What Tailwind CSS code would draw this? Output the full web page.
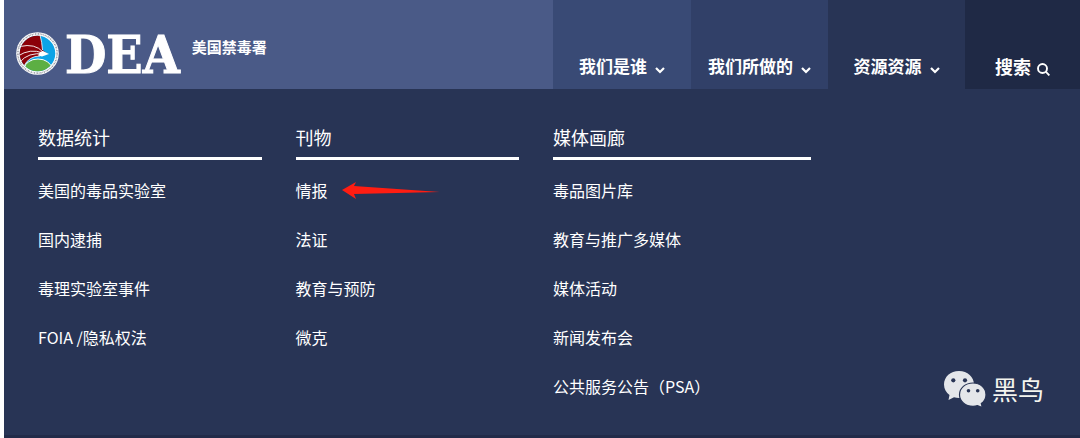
<!DOCTYPE html>
<html lang="zh-CN">
<head>
<meta charset="utf-8">
<meta name="viewport" content="width=device-width, initial-scale=1">
<title>DEA 美国禁毒署</title>
<script src="https://cdn.jsdelivr.net/npm/@tailwindcss/browser@4"></script>
</head>
<body class="min-h-screen bg-white pl-1 font-['Noto_Sans_CJK_SC',sans-serif] text-white">
<div class="relative flex min-h-screen flex-col border-b-3 border-[#222b49] bg-[#283455]">
  <header class="flex">
    <a href="#" class="flex flex-1 items-start bg-[#4a5a87] pl-3">
      <svg class="mt-8 size-[43px] shrink-0" viewBox="0 0 43 43" aria-hidden="true">
        <defs>
          <clipPath id="disc"><circle cx="21.5" cy="21.5" r="17.8"/></clipPath>
        </defs>
        <circle cx="21.5" cy="21.5" r="21.3" fill="#fff"/>
        <circle cx="21.5" cy="21.5" r="19.6" fill="none" stroke="#9a9ca6" stroke-width="1.6" stroke-dasharray="1.2 .7 .6 .8"/>
        <g clip-path="url(#disc)">
          <rect width="43" height="43" fill="#0da3e6"/>
          <ellipse cx="22" cy="36.5" rx="13.5" ry="9.5" fill="#5caf43" stroke="#fff" stroke-width="1"/>
          <path d="M0 3L24 3Q26 10 26.500 18L32 22L24 24Q13 24 8 34L0 32Z" fill="#8b0008"/>
          <path d="M24 3Q26 10 26.500 18M24 24Q13 24 8 34" fill="none" stroke="#fff" stroke-width=".8"/>
          <path d="M4 14.500Q19 11 27 20M2 24Q14 16 27 21M4 30Q12 20 28 22" fill="none" stroke="#fff" stroke-width=".9"/>
          <path d="M24 20L27 19L33 22L26 24.500L22 23.500Z" fill="#fff"/>
        </g>
      </svg>
      <span class="ml-1.5 mt-6 font-['DejaVu_Serif_Condensed','DejaVu_Serif',serif] text-[53px] leading-[60px] font-bold [-webkit-text-stroke:1px_white]">DEA</span>
      <span class="ml-3 mt-[35px] text-[15px] leading-6 font-bold">美国禁毒署</span>
    </a>
    <nav class="flex h-[89px] text-[17px] leading-6 font-bold" aria-label="主导航">
      <button type="button" class="flex w-[138px] items-end justify-center gap-2 bg-[#394a75] pb-[11px]">我们是谁
        <svg class="mb-0.5 h-3 w-2.5" viewBox="0 0 10 12" fill="none" stroke="currentColor" stroke-width="2.2" aria-hidden="true"><path d="M1 4l4 4 4-4"/></svg>
      </button>
      <button type="button" class="flex w-[137px] items-end justify-center gap-2 bg-[#314068] pb-[11px]">我们所做的
        <svg class="mb-0.5 h-3 w-2.5" viewBox="0 0 10 12" fill="none" stroke="currentColor" stroke-width="2.2" aria-hidden="true"><path d="M1 4l4 4 4-4"/></svg>
      </button>
      <button type="button" aria-expanded="true" class="flex w-[137px] items-end justify-center gap-2 bg-[#283455] pb-[11px]">资源资源
        <svg class="mb-0.5 h-3 w-2.5" viewBox="0 0 10 12" fill="none" stroke="currentColor" stroke-width="2.2" aria-hidden="true"><path d="M1 4l4 4 4-4"/></svg>
      </button>
      <button type="button" class="flex w-[115px] items-end justify-center gap-1.5 bg-[#1f2945] pb-[11px] text-lg leading-6">搜索
        <svg class="mb-0.5 size-[13px]" viewBox="0 0 13 13" fill="none" stroke="currentColor" stroke-width="1.9" aria-hidden="true"><circle cx="5.5" cy="5.5" r="4.5"/><path d="M8.7 8.7l3.7 3.7"/></svg>
      </button>
    </nav>
  </header>

  <main class="grid grid-cols-[224fr_224fr_258fr_236fr] gap-x-[34px] pt-9 pl-[34px]">
    <section>
      <h2 class="border-b-3 border-white pb-2 text-lg leading-6">数据统计</h2>
      <ul class="mt-[18px] space-y-[25px] text-base leading-6">
        <li><a href="#">美国的毒品实验室</a></li>
        <li><a href="#">国内逮捕</a></li>
        <li><a href="#">毒理实验室事件</a></li>
        <li><a href="#">FOIA /隐私权法</a></li>
      </ul>
    </section>
    <section>
      <h2 class="border-b-3 border-white pb-2 text-lg leading-6">刊物</h2>
      <ul class="mt-[18px] space-y-[25px] text-base leading-6">
        <li class="flex items-center gap-3.5"><a href="#">情报</a>
          <svg class="h-[17px] w-[99px]" viewBox="0 0 99 17" aria-hidden="true"><path d="M0 8L14 0L12 4L98 10L12 12L14 17Z" fill="#ff1d12"/></svg>
        </li>
        <li><a href="#">法证</a></li>
        <li><a href="#">教育与预防</a></li>
        <li><a href="#">微克</a></li>
      </ul>
    </section>
    <section>
      <h2 class="border-b-3 border-white pb-2 text-lg leading-6">媒体画廊</h2>
      <ul class="mt-[18px] space-y-[25px] text-base leading-6">
        <li><a href="#">毒品图片库</a></li>
        <li><a href="#">教育与推广多媒体</a></li>
        <li><a href="#">媒体活动</a></li>
        <li><a href="#">新闻发布会</a></li>
        <li><a href="#">公共服务公告（PSA）</a></li>
      </ul>
    </section>
  </main>

  <div class="absolute right-9 bottom-7 flex items-center gap-1.5 text-[#f4f4ee]">
    <svg class="h-9 w-[42px]" viewBox="0 0 42 36" aria-hidden="true">
      <path d="M15 0C6.5 0 0 5.8 0 13.5C0 18 2.2 21.5 5.5 24L4.5 29L10 26.2Q12.5 27 15 27C23.5 27 30 21 30 13.5S23.5 0 15 0Z" fill="#e4e6ea"/>
      <path d="M29 12C21.3 12 15.5 17.2 15.5 23.7S21.3 35.3 29 35.3Q31.5 35.3 33.5 34.6L38.3 36.5L37.3 32.5C40.3 30.5 42 27.3 42 23.7C42 17.2 36.5 12 29 12Z" fill="#e4e6ea" stroke="#283455" stroke-width="1.2"/>
      <g fill="#283455"><circle cx="9.3" cy="9.3" r="2.1"/><circle cx="21" cy="9.3" r="2.1"/><circle cx="24.5" cy="19.7" r="1.8"/><circle cx="33.7" cy="19.7" r="1.8"/></g>
    </svg>
    <span class="text-[26px] leading-9">黑鸟</span>
  </div>
</div>
</body>
</html>
